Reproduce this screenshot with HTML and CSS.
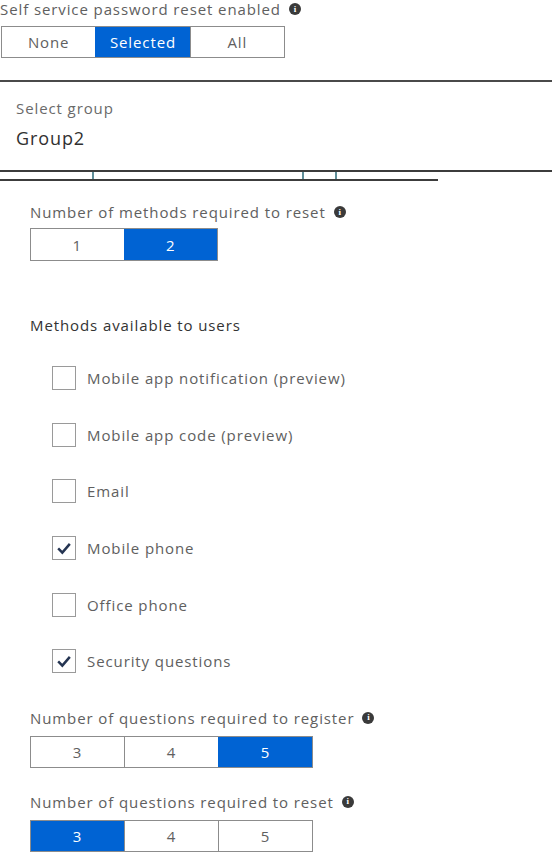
FILE: index.html
```html
<!DOCTYPE html>
<html lang="en">
<head>
    <meta charset="UTF-8">
    <meta name="viewport" content="width=device-width, initial-scale=1.0">
    <title>Password reset - Properties</title>
    <link rel="stylesheet" href="styles.css">
</head>
<body>
    <div class="enable-section">
        <div class="field-label">Self service password reset enabled <span class="info-icon">i</span></div>
        <div class="toggle toggle-wide">
            <div class="toggle-option">None</div>
            <div class="toggle-option active">Selected</div>
            <div class="toggle-option">All</div>
        </div>
    </div>

    <div class="rule"></div>

    <div class="group-section">
        <div class="group-label">Select group</div>
        <div class="group-value">Group2</div>
    </div>

    <div class="double-rule">
        <div class="rule-top"></div>
        <div class="rule-ticks">
            <span class="tick tick-1"></span>
            <span class="tick tick-2"></span>
            <span class="tick tick-3"></span>
        </div>
        <div class="rule-bottom"></div>
    </div>

    <div class="methods-section">
        <div class="field-label methods-count">Number of methods required to reset <span class="info-icon">i</span></div>
        <div class="toggle toggle-two">
            <div class="toggle-option">1</div>
            <div class="toggle-option active">2</div>
        </div>

        <div class="section-title">Methods available to users</div>
        <ul class="method-list">
            <li class="method"><span class="checkbox"></span>Mobile app notification (preview)</li>
            <li class="method"><span class="checkbox"></span>Mobile app code (preview)</li>
            <li class="method"><span class="checkbox"></span>Email</li>
            <li class="method"><span class="checkbox checked"><svg viewBox="0 0 24 24"><path d="M5 12.5 L10 17.5 L19 7" /></svg></span>Mobile phone</li>
            <li class="method"><span class="checkbox"></span>Office phone</li>
            <li class="method"><span class="checkbox checked"><svg viewBox="0 0 24 24"><path d="M5 12.5 L10 17.5 L19 7" /></svg></span>Security questions</li>
        </ul>

        <div class="field-label register-label">Number of questions required to register <span class="info-icon">i</span></div>
        <div class="toggle toggle-wide">
            <div class="toggle-option">3</div>
            <div class="toggle-option">4</div>
            <div class="toggle-option active">5</div>
        </div>

        <div class="field-label reset-label">Number of questions required to reset <span class="info-icon">i</span></div>
        <div class="toggle toggle-wide">
            <div class="toggle-option active">3</div>
            <div class="toggle-option">4</div>
            <div class="toggle-option">5</div>
        </div>
    </div>
</body>
</html>
```

FILE: styles.css
```css
* {
    margin: 0;
    padding: 0;
    box-sizing: border-box;
}

body {
    font-family: 'Open Sans', 'Noto Sans', sans-serif;
    background-color: #fff;
    color: #5a5a5a;
    letter-spacing: 0.9px;
    width: 552px;
    height: 852px;
    overflow: hidden;
}

.field-label {
    font-size: 15px;
    line-height: 20px;
    height: 20px;
    color: #606060;
    display: flex;
    align-items: center;
    gap: 8px;
    white-space: nowrap;
}

.info-icon {
    display: inline-flex;
    justify-content: center;
    align-items: center;
    width: 12px;
    height: 12px;
    border-radius: 50%;
    background-color: #3a3a3a;
    color: #fff;
    font-size: 9px;
    font-weight: bold;
    line-height: 1;
    letter-spacing: 0;
    font-family: 'Liberation Serif', serif;
}

.enable-section .field-label {
    line-height: 18px;
    height: 18px;
}

.toggle {
    display: flex;
    border: 1px solid #8c8c8c;
    height: 33px;
}

.toggle-option {
    flex: 1;
    display: flex;
    justify-content: center;
    align-items: center;
    font-size: 15px;
    color: #606060;
    border-left: 1px solid #8c8c8c;
}

.toggle-option:first-child {
    border-left: none;
}

.toggle-option.active {
    background-color: #0063d3;
    color: #fff;
    border-left-color: #0063d3;
}

.enable-section .toggle {
    width: 284px;
    margin-left: 1px;
    margin-top: 8px;
    height: 32px;
}

.rule {
    margin-top: 22px;
    height: 2px;
    background-color: #4a4a4a;
}

.group-section {
    padding-left: 16px;
}

.group-label {
    margin-top: 16px;
    font-size: 15px;
    line-height: 20px;
    color: #6a6a6a;
}

.group-value {
    margin-top: 8px;
    font-size: 18px;
    line-height: 24px;
    color: #303030;
}

.double-rule {
    margin-top: 20px;
}

.rule-top {
    height: 2px;
    background-color: #3c3c3c;
}

.rule-ticks {
    display: flex;
    height: 7px;
}

.tick {
    width: 2px;
    background-color: #5f8f99;
}

.tick-1 {
    margin-left: 92px;
}

.tick-2 {
    margin-left: 208px;
}

.tick-3 {
    margin-left: 31px;
}

.rule-bottom {
    width: 438px;
    height: 2px;
    background-color: #3c3c3c;
}

.methods-section {
    padding-left: 30px;
}

.methods-count {
    margin-top: 21px;
}

.toggle-two {
    width: 188px;
    margin-top: 6px;
}

.section-title {
    margin-top: 54px;
    font-size: 15px;
    line-height: 20px;
    color: #333;
}

.method-list {
    list-style: none;
    margin-top: 15px;
    padding-left: 22px;
}

.method {
    height: 56.6px;
    display: flex;
    align-items: center;
    gap: 11px;
    font-size: 15px;
    color: #606060;
}

.checkbox {
    width: 24px;
    height: 24px;
    border: 1px solid #9a9a9a;
    display: flex;
    justify-content: center;
    align-items: center;
}

.checkbox svg {
    width: 20px;
    height: 20px;
    fill: none;
    stroke: #253552;
    stroke-width: 3;
}

.register-label {
    margin-top: 18px;
}

.toggle-wide {
    width: 283px;
}

.methods-section .toggle-wide {
    margin-top: 8px;
    height: 32px;
}

.reset-label {
    margin-top: 24px;
}
```
